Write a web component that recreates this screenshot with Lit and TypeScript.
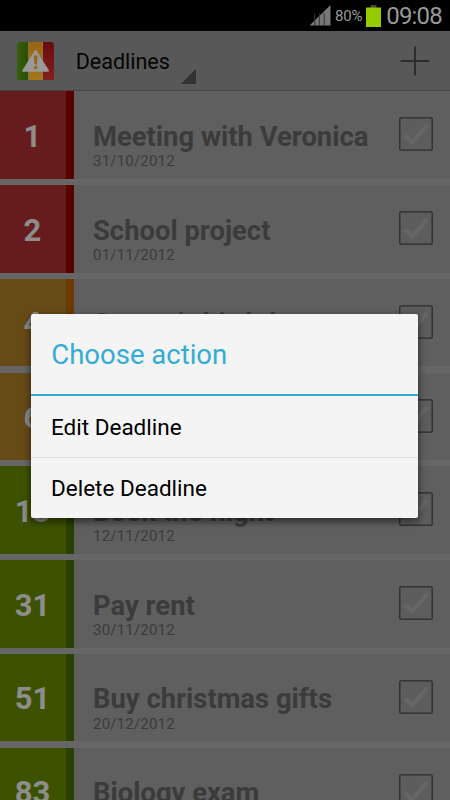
import { LitElement, html, css, svg } from "lit";
import { customElement, property } from "lit/decorators.js";

type Tone = "red" | "amber" | "green";

@customElement("deadline-row")
class DeadlineRow extends LitElement {
  @property() days = "";
  @property() name = "";
  @property() date = "";
  @property({ reflect: true }) tone: Tone = "green";

  static styles = css`
    :host {
      display: flex;
      box-sizing: border-box;
      flex: none;
      height: 87.5px;
      background: #5f5f5f;
    }
    :host([tone="red"]) { --fill: #661c1c; --edge: #590000; }
    :host([tone="amber"]) { --fill: #674b17; --edge: #6b3b00; }
    :host([tone="green"]) { --fill: #3d5200; --edge: #284000; }
    .days {
      box-sizing: border-box;
      width: 74px;
      flex: none;
      background: var(--fill);
      border-right: 8px solid var(--edge);
      color: #8d8d8d;
      font-weight: 700;
      font-size: 31px;
      line-height: 38px;
      text-align: center;
      padding: 26.7px 1px 0 0;
    }
    .info { flex: 1; padding: 29.5px 0 0 19px; white-space: nowrap; }
    .name {
      display: block;
      width: max-content;
      font-weight: 700;
      font-size: 27.4px;
      line-height: 32px;
      color: #3b3b3b;
    }
    .date {
      display: block;
      margin-top: -0.5px;
      font-size: 15px;
      line-height: 18px;
      color: #3b3b3b;
      letter-spacing: 0.2px;
    }
    svg { flex: none; margin: 26px 17.5px 0 0; }
  `;

  render() {
    return html`
      <div class="days">${this.days}</div>
      <div class="info">
        <span class="name">${this.name}</span>
        <span class="date">${this.date}</span>
      </div>
      <svg width="34" height="34" viewBox="0 0 34 34">
        <rect x="0.8" y="0.8" width="32.4" height="32.4" rx="1.2" fill="#5d5d5d" stroke="#2d2d2d" stroke-width="1.3" />
        <path d="M5.5 18.5 L13 25.5 L28.5 8" fill="none" stroke="#666" stroke-width="4.2" />
      </svg>
    `;
  }
}

@customElement("app-root")
class AppRoot extends LitElement {
  private rows: { days: string; name: string; date: string; tone: Tone }[] = [
    { days: "1", name: "Meeting with Veronica", date: "31/10/2012", tone: "red" },
    { days: "2", name: "School project", date: "01/11/2012", tone: "red" },
    { days: "4", name: "Sergey's birthday", date: "03/11/2012", tone: "amber" },
    { days: "6", name: "", date: "05/11/2012", tone: "amber" },
    { days: "13", name: "Book the flight", date: "12/11/2012", tone: "green" },
    { days: "31", name: "Pay rent", date: "30/11/2012", tone: "green" },
    { days: "51", name: "Buy christmas gifts", date: "20/12/2012", tone: "green" },
    { days: "83", name: "Biology exam", date: "21/01/2013", tone: "green" },
  ];

  static styles = css`
    :host {
      display: block;
      position: relative;
      width: 450px;
      height: 800px;
      overflow: hidden;
      font-family: Roboto, "Noto Sans", sans-serif;
      background: #666;
    }
    .page { display: flex; flex-direction: column; height: 800px; overflow: hidden; }
    .status {
      flex: none;
      height: 31px;
      background: #000;
      display: flex;
      align-items: center;
      justify-content: flex-end;
      color: #999;
      padding-right: 8px;
    }
    .percent { font-size: 15px; letter-spacing: -0.2px; margin: 1px 3.5px 0 3.5px; }
    .battery { margin-right: 5.5px; }
    .clock { font-size: 24px; line-height: 30px; letter-spacing: -0.8px; }
    .bar {
      box-sizing: border-box;
      flex: none;
      height: 60.3px;
      background: #585858;
      border-bottom: 1px solid #464646;
      display: flex;
      align-items: flex-start;
    }
    .logo { margin: 10px 0 0 16px; }
    .heading {
      width: 95px;
      font-size: 21.6px;
      line-height: 26px;
      letter-spacing: -0.05px;
      margin: 18px 0 0 20.7px;
      color: #050505;
    }
    .caret { margin: 38px 0 0 10px; }
    .plus { margin: 15px 20px 0 auto; }
    .list { display: flex; flex-direction: column; gap: 6.25px; }
    .dialog {
      position: absolute;
      left: 31px;
      top: 313.5px;
      width: 387px;
      height: 204px;
      box-sizing: border-box;
      border-radius: 2px;
      background: #f4f4f4;
      box-shadow: 0 3px 7px 1px rgba(0, 0, 0, 0.5);
      display: flex;
      flex-direction: column;
    }
    .title {
      box-sizing: border-box;
      height: 82.5px;
      padding: 0 20.3px;
      line-height: 82px;
      font-size: 27.5px;
      color: #33acd7;
      border-bottom: 2px solid #2fa9d4;
    }
    .item {
      box-sizing: border-box;
      height: 60px;
      padding: 0 20px;
      line-height: 60px;
      font-size: 22.5px;
      color: #000;
    }
    .first { height: 62px; line-height: 62px; border-bottom: 1.5px solid #dedede; }
  `;

  render() {
    return html`
      <div class="page">
        <div class="status">
          <svg width="21" height="21" viewBox="0 0 21 21">
            <path d="M0 20.5 V20 L20.5 0 V20.5 Z" fill="#777" />
            ${[4.7, 9.3, 14.2].map((x) => svg`<path d="M${x} 8 V20.5" stroke="#333" stroke-width="1" />`)}
          </svg>
          <span class="percent">80%</span>
          <svg class="battery" width="15" height="22" viewBox="0 0 15 22">
            <rect x="4.5" y="0" width="6" height="3" fill="#444" />
            <rect x="0" y="2.5" width="15" height="19.5" fill="#94cc00" />
          </svg>
          <span class="clock">09:08</span>
        </div>
        <div class="bar">
          <svg class="logo" width="39" height="40" viewBox="0 0 39 40">
            <defs>
              <clipPath id="shape"><path d="M1 4 Q1 1 4 1 H35 Q38 1 38 4 V39 H1 Z" /></clipPath>
              <linearGradient id="green"><stop offset="0" stop-color="#386008" /><stop offset="1" stop-color="#284d08" /></linearGradient>
              <linearGradient id="amber" x2="0" y2="1"><stop offset="0" stop-color="#9a6412" /><stop offset="1" stop-color="#a5781c" /></linearGradient>
              <linearGradient id="red" x2="0" y2="1"><stop offset="0" stop-color="#680c0c" /><stop offset="1" stop-color="#842020" /></linearGradient>
            </defs>
            <g clip-path="url(#shape)">
              <rect width="13" height="40" fill="url(#green)" />
              <rect x="12.5" width="15" height="40" fill="url(#amber)" />
              <rect x="26.5" width="13" height="40" fill="url(#red)" />
              <path d="M12.7 1 V39 M26.5 1 V39" stroke="#98805a" stroke-width="0.8" />
            </g>
            <path d="M19.6 10 L32 29.7 H7.2 Z" fill="#999" stroke="#999" stroke-width="2" stroke-linejoin="round" />
            <path d="M17.7 14.5 H21.7 L20.9 23.5 H18.5 Z" fill="#95681c" />
            <circle cx="19.7" cy="26.4" r="1.8" fill="#95681c" />
          </svg>
          <span class="heading">Deadlines</span>
          <svg class="caret" width="15" height="15" viewBox="0 0 15 15"><path d="M15 0 V15 H0 Z" fill="#323232" /></svg>
          <svg class="plus" width="30" height="30" viewBox="0 0 30 30">
            <path d="M15 0.5 V29.5 M0.5 15 H29.5" stroke="#2c2c2c" stroke-width="2" />
          </svg>
        </div>
        <div class="list">
          ${this.rows.map(
            (r) => html`<deadline-row .days=${r.days} .name=${r.name} .date=${r.date} .tone=${r.tone}></deadline-row>`
          )}
        </div>
      </div>
      <div class="dialog">
        <div class="title"><span>Choose action</span></div>
        <div class="item first"><span>Edit Deadline</span></div>
        <div class="item"><span>Delete Deadline</span></div>
      </div>
    `;
  }
}
